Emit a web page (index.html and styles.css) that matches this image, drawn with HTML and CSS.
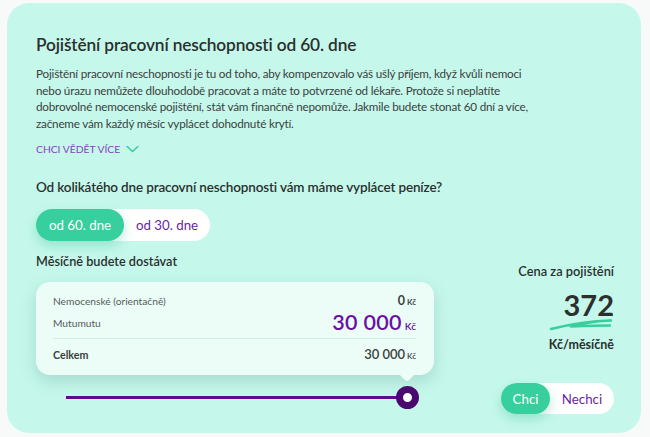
FILE: index.html
```html
<!DOCTYPE html>
<html lang="cs">
<head>
<meta charset="utf-8">
<title>Pojištění pracovní neschopnosti</title>
<link rel="stylesheet" href="styles.css">
</head>
<body>
<div class="card">
  <h1 class="title">Pojištění pracovní neschopnosti od 60. dne</h1>
  <p class="desc">Pojištění pracovní neschopnosti je tu od toho, aby kompenzovalo váš ušlý příjem, když kvůli nemoci nebo úrazu nemůžete dlouhodobě pracovat a máte to potvrzené od lékaře. Protože si neplatíte dobrovolné nemocenské pojištění, stát vám finančně nepomůže. Jakmile budete stonat 60 dní a více, začneme vám každý měsíc vyplácet dohodnuté krytí.</p>
  <div class="more">CHCI VĚDĚT VÍCE <svg class="chev" width="13" height="8" viewBox="0 0 13 8"><path d="M1.2 1.5 L6.5 6.5 L11.8 1.5" fill="none" stroke="#36cf9d" stroke-width="1.6" stroke-linecap="round" stroke-linejoin="round"/></svg></div>
  <h2 class="question">Od kolikátého dne pracovní neschopnosti vám máme vyplácet peníze?</h2>
  <div class="seg seg-days">
    <span class="seg-item active">od 60. dne</span>
    <span class="seg-item">od 30. dne</span>
  </div>
  <div class="bottom">
    <div class="left">
      <div class="label">Měsíčně budete dostávat</div>
      <div class="tip">
        <div class="row">
          <span class="name">Nemocenské (orientačně)</span>
          <span class="amt amt-small">0<small>Kč</small></span>
        </div>
        <div class="row row-big">
          <span class="name">Mutumutu</span>
          <span class="amt amt-big">30 000<small>Kč</small></span>
        </div>
        <div class="sep"></div>
        <div class="row row-total">
          <span class="name">Celkem</span>
          <span class="amt amt-total">30 000<small>Kč</small></span>
        </div>
      </div>
      <div class="slider">
        <div class="track"></div>
        <div class="thumb"></div>
      </div>
    </div>
    <div class="right">
      <div class="price-label">Cena za pojištění</div>
      <div class="price">372</div>
      <svg class="scribble" width="66" height="14" viewBox="0 0 66 14"><path d="M2 12 C 18 8, 40 4, 62 3.5 C 52 3.5, 34 6.5, 22 9.5 C 34 9, 48 8.5, 61 8.5" fill="none" stroke="#36cf9d" stroke-width="2.6" stroke-linecap="round" stroke-linejoin="round"/></svg>
      <div class="unit">Kč/měsíčně</div>
      <div class="seg seg-want">
        <span class="seg-item active">Chci</span>
        <span class="seg-item">Nechci</span>
      </div>
    </div>
  </div>
</div>
</body>
</html>
```
FILE: styles.css
```css
* { box-sizing: border-box; }
html, body { margin: 0; padding: 0; }
body {
  background: #f8fafa;
  font-family: Lato, "Noto Sans", sans-serif;
  color: #2c3130;
  width: 650px;
  height: 437px;
  overflow: hidden;
}
.card {
  margin: 3px 9px 0 7px;
  height: 430px;
  background: #c5f8eb;
  border-radius: 22px;
  padding: 31px 27px 0 29px;
}
.title {
  margin: 0;
  font-size: 17.3px;
  line-height: 22px;
  font-weight: 600;
  color: #2b2f2e;
  letter-spacing: -0.15px;
}
.desc {
  margin: 9px 0 0;
  width: 504px;
  font-size: 11.7px;
  line-height: 16.5px;
  color: #3a3f3e;
  letter-spacing: -0.2px;
}
.more {
  margin-top: 11px;
  font-size: 10.3px;
  line-height: 14px;
  color: #8a3cc4;
  display: flex;
  align-items: center;
  gap: 6px;
}
.chev { display: block; }
.question {
  margin: 22px 0 0;
  font-size: 13.5px;
  line-height: 18px;
  font-weight: 600;
  color: #2b2f2e;
  letter-spacing: -0.15px;
}
.seg {
  display: inline-flex;
  background: #fff;
  align-items: stretch;
}
.seg-item {
  display: flex;
  align-items: center;
  justify-content: center;
  color: #6a1fa3;
}
.seg-item.active {
  background: #36cf9d;
  color: #fff;
  box-shadow: 0 5px 12px rgba(40, 180, 135, 0.3);
}
.seg-days {
  margin-top: 13px;
  height: 32px;
  border-radius: 16px;
  font-size: 13.3px;
}
.seg-days .seg-item { border-radius: 16px; }
.seg-days .seg-item.active { width: 88px; }
.seg-days .seg-item:not(.active) { width: 86px; }
.bottom {
  display: flex;
  justify-content: space-between;
  margin-top: 12px;
}
.left { width: 398px; }
.label {
  font-size: 12.7px;
  line-height: 16px;
  font-weight: 600;
  color: #2b2f2e;
}
.tip {
  margin-top: 13px;
  height: 93px;
  background: #ecfdf8;
  border-radius: 14px;
  padding: 11px 18px 0 17px;
  position: relative;
  box-shadow: 0 6px 16px rgba(90, 140, 135, 0.28);
}
.tip::after {
  content: "";
  position: absolute;
  right: 22px;
  bottom: -5px;
  width: 10px;
  height: 10px;
  background: #ecfdf8;
  transform: rotate(45deg);
  border-radius: 0 0 3px 0;
}
.row {
  display: flex;
  justify-content: space-between;
  align-items: center;
  height: 16px;
}
.name {
  font-size: 10.2px;
  color: #555b5a;
}
.row-big { margin-top: 2px; height: 24px; }
.row-total .name { font-weight: 700; color: #3a3f3e; font-size: 10.7px; }
.amt { line-height: 1; }
.amt small { font-size: 8px; margin-left: 2px; }
.amt-small { font-size: 12.5px; font-weight: 700; color: #3a3f3e; }
.amt-big { font-size: 21.5px; font-weight: 600; color: #6a0fa3; letter-spacing: 0.3px; }
.amt-big small { font-size: 10px; margin-left: 3px; letter-spacing: 0; }
.amt-total { font-size: 13px; font-weight: 600; color: #3a3f3e; }
.sep {
  height: 1px;
  background: #d4ece6;
  margin: 3px 0 7px;
}
.slider {
  margin-top: 10px;
  height: 24px;
  display: flex;
  align-items: center;
  padding: 0 15px 0 30px;
}
.track {
  flex: 1;
  height: 3px;
  background: #5d0b8f;
}
.thumb {
  width: 23px;
  height: 23px;
  margin-left: -6px;
  border-radius: 50%;
  background: #fff;
  border: 7px solid #4a086e;
}
.right {
  display: flex;
  flex-direction: column;
  align-items: flex-end;
}
.price-label {
  margin-top: 10px;
  font-size: 12.8px;
  line-height: 16px;
  font-weight: 600;
  color: #2b2f2e;
}
.price {
  margin-top: 12px;
  font-size: 29px;
  line-height: 28px;
  font-weight: 700;
  color: #2b2f2e;
}
.scribble { display: block; margin-top: -2px; margin-right: -1px; }
.unit {
  margin-top: 6px;
  font-size: 12.5px;
  line-height: 16px;
  font-weight: 700;
  color: #2b2f2e;
}
.seg-want {
  margin-top: 30px;
  height: 31px;
  border-radius: 16px;
  font-size: 13.3px;
}
.seg-want .seg-item { border-radius: 16px; }
.seg-want .seg-item.active { width: 49px; }
.seg-want .seg-item:not(.active) { width: 64px; }
```
